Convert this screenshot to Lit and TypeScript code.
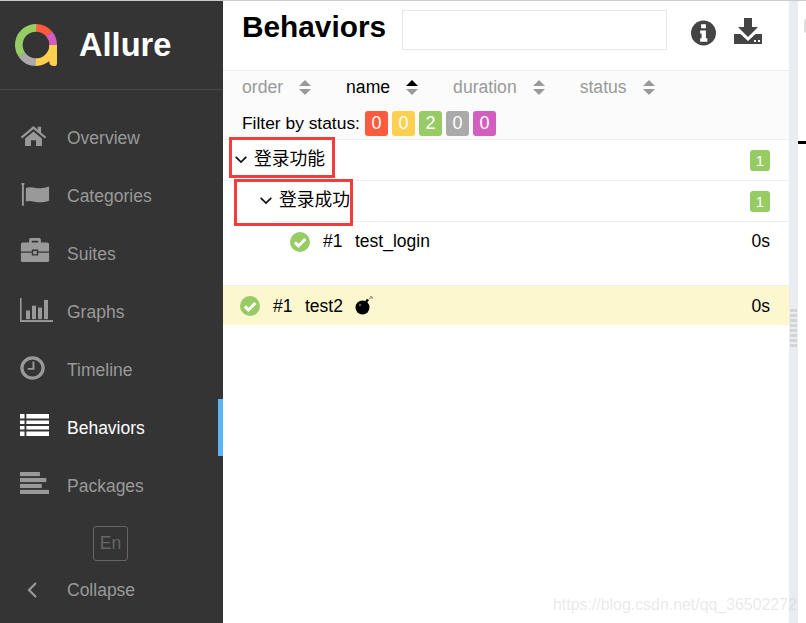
import { LitElement, html, css, svg } from "lit";
import { customElement } from "lit/decorators.js";

const ICONS: Record<string, unknown> = {
  home: svg`<path d="M1 15 L16 2 L21 6.5 V3 H25 V10 L31 15 L29.5 17 L16 5.5 L2.5 17 Z M6 17 L16 8.5 L26 17 V26 H19 V19 H13 V26 H6 Z"/>`,
  flag: svg`<rect x="2" y="0" width="2" height="26" rx="1"/><circle cx="3" cy="1" r="1.6"/><path d="M6 6 C12 2 18 9 30 4 V20 C18 25 12 18 6 21 Z"/>`,
  suites: svg`<path d="M10 5 V2 Q10 0 12 0 H21 Q23 0 23 2 V5 H30 Q32 5 32 7 V14.5 H20 V12.5 H13 V14.5 H1 V7 Q1 5 3 5 Z M13 5 H20 V3 H13 Z M1 16 H13 V19 H20 V16 H32 V25 Q32 26 30 26 H3 Q1 26 1 25 Z M14.5 14 H18.5 V17.5 H14.5 Z"/>`,
  graphs: svg`<rect x="0" y="0" width="1.6" height="25"/><rect x="0" y="23" width="33" height="2"/><rect x="6" y="13" width="4" height="9"/><rect x="12" y="8" width="4" height="14"/><rect x="18" y="10" width="4" height="12"/><rect x="24" y="2" width="4" height="20"/>`,
  timeline: svg`<circle cx="13" cy="13" r="11" fill="none" stroke="currentColor" stroke-width="3.4"/><path d="M13 6 H15 V15 H8 V13 H13 Z"/>`,
  behaviors: svg`<path d="M0 0 H5 V5 H0 Z M7 0 H32 V5 H7 Z M0 7 H5 V11 H0 Z M7 7 H32 V11 H7 Z M0 13 H5 V17 H0 Z M7 13 H32 V17 H7 Z M0 19 H5 V24 H0 Z M7 19 H32 V24 H7 Z"/>`,
  packages: svg`<rect x="0" y="0" width="22" height="4.5"/><rect x="0" y="6.5" width="29" height="4.5"/><rect x="0" y="13" width="24" height="4.5"/><rect x="0" y="19.5" width="32" height="4.5"/>`,
};

const NAV = [
  { label: "Overview", icon: "home", w: 27, h: 20, vb: "0 2 32 24", lift: 2, active: false },
  { label: "Categories", icon: "flag", w: 31, h: 23, vb: "0 0 32 26", lift: 1.5, active: false },
  { label: "Suites", icon: "suites", w: 30, h: 24, vb: "0 0 33 26", lift: 4, active: false },
  { label: "Graphs", icon: "graphs", w: 33, h: 24, vb: "0 0 33 25", lift: 2, active: false },
  { label: "Timeline", icon: "timeline", w: 25, h: 24, vb: "0 0 26 26", lift: 2, active: false },
  { label: "Behaviors", icon: "behaviors", w: 29, h: 22, vb: "0 0 32 24", lift: 3, active: true },
  { label: "Packages", icon: "packages", w: 29, h: 22, vb: "0 0 32 24", lift: 3, active: false },
];

const SORTS = [
  { label: "order", active: false },
  { label: "name", active: true },
  { label: "duration", active: false },
  { label: "status", active: false },
];

const STATUS = [
  { n: 0, c: "#fd5a3e" },
  { n: 0, c: "#ffd050" },
  { n: 2, c: "#97cc64" },
  { n: 0, c: "#aaaaaa" },
  { n: 0, c: "#d35ebe" },
];

const chevron = html`<svg class="chev" viewBox="0 0 12 8" width="12" height="8"><path d="M0.7 0.8 L6 6.1 L11.3 0.8" fill="none" stroke="#111" stroke-width="1.7"/></svg>`;
const check = html`<svg class="check" viewBox="0 0 20 20" width="20" height="20"><circle cx="10" cy="10" r="10" fill="#97cc64"/><path d="M4.8 10.4 L8.4 14 L15.4 7" fill="none" stroke="#fff" stroke-width="3"/></svg>`;

@customElement("app-root")
export class AppRoot extends LitElement {
  static styles = css`
    :host { display: block; height: 623px; overflow: hidden; position: relative; font-family: "Liberation Sans", Arial, sans-serif; background: #fff; }
    .app { display: grid; grid-template-columns: 223px 566px 9px 8px; height: 623px; }
    .side { background: #343434; color: #999; display: flex; flex-direction: column; border-top: 1px solid #ccc; }
    .brand { height: 88px; display: flex; align-items: center; padding-left: 15px; gap: 22px; border-bottom: 1px solid #4a4a4a; box-sizing: content-box; }
    .brand span { color: #fff; font-weight: 700; font-size: 32.6px; }
    .nav { padding-top: 19px; display: flex; flex-direction: column; }
    .item { height: 58px; display: flex; align-items: center; font-size: 17.5px; position: relative; color: #999; }
    .item .ic { width: 67px; padding-left: 20px; box-sizing: border-box; display: flex; align-items: center; flex: none; }
    .item svg { fill: currentColor; color: #999; display: block; }
    .item.active { color: #fff; }
    .item.active svg { color: #fff; }
    .item.active::after { content: ""; position: absolute; right: 0; top: 0; bottom: 1px; width: 5px; background: #5eb3f7; }
    .lang { align-self: flex-start; margin: 11px 0 0 93px; width: 35px; height: 35px; box-sizing: border-box; border: 1px solid #666; border-radius: 3px; color: #666; font-size: 17.6px; display: flex; align-items: center; justify-content: center; }
    .collapse { color: #999; }
    .collapse .ic { padding-left: 26px; }
    .collapse svg { fill: none; }
    .main { border-top: 1px solid #ccc; display: flex; flex-direction: column; min-width: 0; }
    .head { height: 69px; display: flex; align-items: flex-start; border-bottom: 1px solid #eee; }
    h1 { margin: 9px 0 0 19px; font-size: 29.8px; line-height: 34px; font-weight: 700; color: #000; width: 160px; flex: none; }
    .search { margin-top: 9px; width: 265px; height: 40px; box-sizing: border-box; border: 1.5px solid #e8e8e8; flex: none; }
    .tools { display: flex; gap: 18px; margin: 19px 0 0 24px; align-items: flex-start; }
    .tools svg { fill: #444; display: block; }
    .tools .dl { margin-top: -2px; }
    .bar { height: 68px; background: #fbfbfb; border-bottom: 1px solid #eee; padding-left: 19px; display: flex; flex-direction: column; color: #000; font-size: 17.4px; }
    .sorts { display: flex; align-items: center; height: 33px; font-size: 17.6px; }
    .sort { display: flex; align-items: center; gap: 16px; margin-right: 35px; color: #999; }
    .sort.on { color: #000; }
    .sort svg { display: block; }
    .filter { display: flex; align-items: center; height: 26px; margin-top: 6px; }
    .filter .lbl { margin-right: 5px; }
    .st { width: 23px; height: 25px; box-sizing: border-box; border-radius: 3px; color: #fff; font-size: 18px; display: flex; align-items: center; justify-content: center; margin-right: 4px; }
    .row { display: flex; align-items: center; font-size: 17.5px; color: #000; box-sizing: border-box; }
    .group { height: 41px; border-bottom: 1px solid #eee; padding-right: 19px; font-family: "Noto Sans CJK SC", "Liberation Sans", sans-serif; font-size: 17.8px; }
    .g1 { padding-left: 12px; }
    .g2 { margin-left: 50px; }
    .g2 .chev { margin-left: -13px; }
    .group .chev { flex: none; margin-right: 7px; }
    .group .name { flex: 1; line-height: 1; padding-bottom: 4px; }
    .cnt { width: 20px; height: 21px; background: #97cc64; color: #fff; font-family: "Liberation Sans", sans-serif; font-size: 15px; border-radius: 3px; display: flex; align-items: center; justify-content: center; }
    .leaf { height: 40px; padding-right: 19px; }
    .leaf.l2 { padding-left: 67px; height: 39px; margin-bottom: 24px; }
    .leaf.l0 { padding-left: 17px; background: #fdf7d0; border-top: 1px solid #eee; }
    .leaf.l0 span { padding-top: 2px; }
    .leaf .no { margin-left: 13px; width: 32px; }
    .leaf .nm { flex: none; }
    .leaf .tm { margin-left: auto; }
    .bomb { margin-left: 11px; display: block; }
    .split { background: #e9edf2; display: flex; flex-direction: column; align-items: center; border-top: 1px solid #ccc; }
    .grip { margin-top: 308px; width: 7px; height: 38px; background: repeating-linear-gradient(to bottom, #d4d4d4 0 3px, transparent 3px 5px); }
    .far { border-top: 1px solid #ccc; position: relative; }
    .far .tick { position: absolute; left: 0; right: 0; top: 140px; height: 3px; background: #000; }
    .far .nub { position: absolute; right: 0; top: 18px; width: 2px; height: 14px; background: #ddd; border-radius: 2px 0 0 2px; }
    .mark { position: absolute; border: 3px solid #f53c3c; box-sizing: border-box; pointer-events: none; }
    .m1 { left: 229px; top: 137px; width: 106px; height: 41px; }
    .m2 { left: 234px; top: 179px; width: 119px; height: 47px; }
    .wm { position: absolute; left: 553px; top: 595px; font-size: 15.9px; color: rgba(170, 170, 170, 0.27); white-space: nowrap; line-height: 20px; }
  `;

  private logo() {
    const c = 2 * Math.PI * 18;
    const seg = (color: string, from: number, to: number) =>
      svg`<circle cx="22" cy="22" r="18" fill="none" stroke="${color}" stroke-width="8" stroke-dasharray="${(c * (to - from)) / 360} ${c}" transform="rotate(${from - 90} 22 22)"/>`;
    return html`<svg width="42" height="42" viewBox="0 0 44 44" style="flex:none">
      ${seg("#fd5a3e", 0, 50)}${seg("#d35ebe", 50, 90)}${seg("#ffd050", 90, 180)}${seg("#aaaaaa", 180, 235)}${seg("#97cc64", 235, 360)}
      <path d="M36 22 H44 V41 Q44 44 41 44 Q36 44 36 40 Z" fill="#ffd050"/>
    </svg>`;
  }

  private arrows(on: boolean) {
    return html`<svg width="12" height="15" viewBox="0 0 12 15"><path d="M6 0 L12 6 H0 Z" fill="${on ? "#000" : "#999"}"/><path d="M6 15 L12 9 H0 Z" fill="#999"/></svg>`;
  }

  render() {
    return html`<div class="app">
      <aside class="side">
        <div class="brand">${this.logo()}<span>Allure</span></div>
        <nav class="nav">
          ${NAV.map(
            (n) => html`<div class="item ${n.active ? "active" : ""}">
              <div class="ic" style="padding-bottom:${n.lift * 2}px"><svg width="${n.w}" height="${n.h}" viewBox="${n.vb}" preserveAspectRatio="none">${ICONS[n.icon]}</svg></div>
              ${n.label}
            </div>`
          )}
        </nav>
        <div class="lang">En</div>
        <div class="item collapse">
          <div class="ic"><svg width="12" height="18" viewBox="0 0 12 18"><path d="M10 2 L3 9 L10 16" stroke="#999" stroke-width="2.2" fill="none"/></svg></div>
          Collapse
        </div>
      </aside>
      <main class="main">
        <header class="head">
          <h1>Behaviors</h1>
          <div class="search"></div>
          <div class="tools">
            <svg width="25" height="26" viewBox="0 0 26 26"><circle cx="13" cy="13" r="13"/><path d="M10.5 4 H15.5 V8 H10.5 Z M9.5 10.5 H15.5 V18.5 H17 V22 H9.5 V18.5 H11 V13.5 H9.5 Z" fill="#fff"/></svg>
            <svg class="dl" width="28" height="26" viewBox="0 0 28 26"><path d="M10 0 H18 V9 H24 L14 19 L4 9 H10 Z"/><path d="M0 16 H6.5 L14 23 L21.5 16 H28 V26 H0 Z"/><rect x="20" y="22" width="2" height="2" fill="#fff"/><rect x="24" y="22" width="2" height="2" fill="#fff"/></svg>
          </div>
        </header>
        <section class="bar">
          <div class="sorts">
            ${SORTS.map((s) => html`<div class="sort ${s.active ? "on" : ""}">${s.label}${this.arrows(s.active)}</div>`)}
          </div>
          <div class="filter">
            <span class="lbl">Filter by status:</span>
            ${STATUS.map((s) => html`<span class="st" style="background:${s.c}">${s.n}</span>`)}
          </div>
        </section>
        <div class="row group g1">${chevron}<span class="name">登录功能</span><span class="cnt">1</span></div>
        <div class="row group g2">${chevron}<span class="name">登录成功</span><span class="cnt">1</span></div>
        <div class="row leaf l2">${check}<span class="no">#1</span><span class="nm">test_login</span><span class="tm">0s</span></div>
        <div class="row leaf l0">${check}<span class="no">#1</span><span class="nm">test2</span>
          <svg class="bomb" width="20" height="20" viewBox="0 0 20 20"><circle cx="8.5" cy="11.5" r="7" fill="#000"/><path d="M12 6 L14 3.5" stroke="#000" stroke-width="2.4"/><path d="M14.5 3.5 L18 1 M16 0.8 H18.2 V3" stroke="#888" stroke-width="1" fill="none"/><circle cx="6" cy="9" r="1.2" fill="#666"/></svg>
          <span class="tm">0s</span></div>
      </main>
      <div class="split"><div class="grip"></div></div>
      <div class="far"><div class="nub"></div><div class="tick"></div></div>
    </div>
    <div class="mark m1"></div>
    <div class="mark m2"></div>
    <div class="wm">https://blog.csdn.net/qq_36502272</div>`;
  }
}
